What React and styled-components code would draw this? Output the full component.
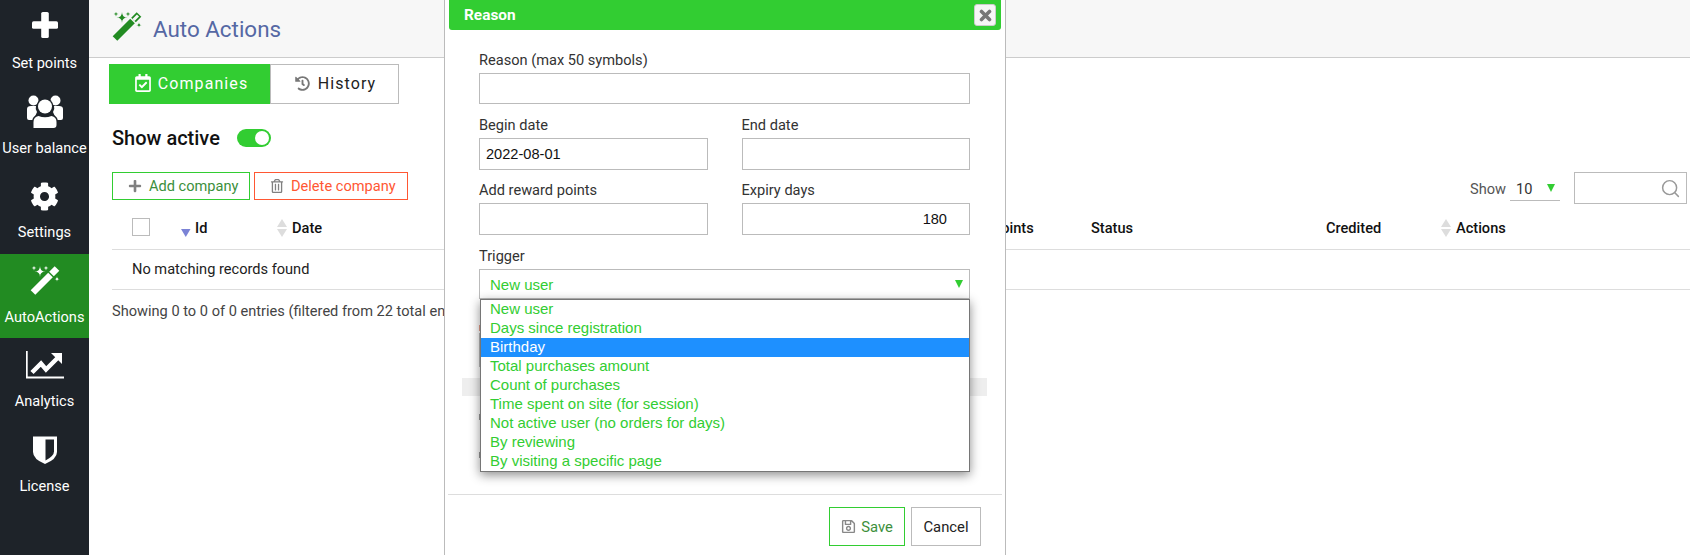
import React from "react";
import styled, { createGlobalStyle } from "styled-components";
import { FaCog, FaHistory, FaRegCalendarCheck, FaRegSave, FaPlus, FaRegTrashAlt } from "react-icons/fa";
import { Search } from "lucide-react";

const GREEN = "#32cd32";
const DARK_GREEN = "#228b22";
const ORANGE = "#ff5733";
const ROBOTO = `Roboto, "Liberation Sans", sans-serif`;
const ARIAL = `"Liberation Sans", Arial, sans-serif`;

const Global = createGlobalStyle`
  html, body { margin: 0; padding: 0; height: 555px; overflow: hidden; background: #fff; }
  * { box-sizing: border-box; }
  body { font-family: ${ROBOTO}; font-size: 14.6px; color: #222; }
`;

const Page = styled.div`
  position: relative;
  display: flex;
  width: 1690px;
  height: 555px;
  overflow: hidden;
`;

const Sidebar = styled.nav`
  flex: 0 0 89px;
  display: flex;
  flex-direction: column;
  background: #1e2329;
`;

const NavItem = styled.a`
  flex: 0 0 84.6px;
  display: flex;
  flex-direction: column;
  align-items: center;
  background: ${(p) => (p.$active ? DARK_GREEN : "transparent")};
  color: #fff;
`;

const NavIcon = styled.span`
  height: 54px;
  display: flex;
  align-items: center;
  justify-content: center;
`;

const NavLabel = styled.span`
  font-size: 14.6px;
  font-weight: 400;
  line-height: 18px;
  white-space: nowrap;
`;

const Main = styled.main`
  flex: 1;
  min-width: 0;
  display: flex;
  flex-direction: column;
`;

const TopBar = styled.header`
  height: 58px;
  flex: none;
  display: flex;
  align-items: flex-start;
  gap: 11px;
  padding: 12px 0 0 23px;
  background: #f7f7f7;
  border-bottom: 1px solid #ccc;
`;

const Title = styled.h1`
  margin: 2px 0 0;
  font-size: 22.4px;
  font-weight: 400;
  line-height: 30px;
  color: #5568a4;
`;

const Tabs = styled.div`
  display: flex;
  margin: 6px 0 0 20px;
  height: 40px;
`;

const Tab = styled.button`
  width: ${(p) => p.$w}px;
  display: flex;
  align-items: center;
  justify-content: center;
  gap: ${(p) => (p.$active ? 6 : 8)}px;
  padding: 0 0 2px ${(p) => (p.$active ? 3 : 2)}px;
  font: 400 16px ${ROBOTO};
  letter-spacing: 1.1px;
  background: ${(p) => (p.$active ? GREEN : "#fff")};
  color: ${(p) => (p.$active ? "#fff" : "#222")};
  border: ${(p) => (p.$active ? "none" : "1px solid #bbb")};
  svg { color: ${(p) => (p.$active ? "#fff" : "#777")}; }
`;

const ActiveRow = styled.div`
  display: flex;
  align-items: center;
  gap: 17px;
  height: 24px;
  margin: 22px 0 0 23px;
  font-size: 20px;
  font-weight: 500;
  color: #111;
`;

const Toggle = styled.span`
  width: 34px;
  height: 18px;
  border-radius: 9px;
  background: ${GREEN};
  display: flex;
  justify-content: flex-end;
  align-items: center;
  padding-right: 2px;
  &::after {
    content: "";
    width: 14px;
    height: 14px;
    border-radius: 50%;
    background: #fff;
  }
`;

const Toolbar = styled.div`
  display: flex;
  height: 28px;
  margin-top: 22px;
  padding: 0 3px 0 23px;
  gap: 4px;
`;

const ActionButton = styled.button`
  height: 28px;
  width: ${(p) => p.$w}px;
  display: flex;
  align-items: center;
  gap: 7px;
  padding: 0 0 0 15px;
  background: #fff;
  border: 1px solid ${(p) => p.$color};
  color: ${(p) => p.$text};
  font: 400 14.6px ${ROBOTO};
  white-space: nowrap;
  svg { color: #808080; }
`;

const LengthGroup = styled.div`
  margin-left: auto;
  display: flex;
  align-items: flex-start;
  gap: 4px;
  color: #555;
  line-height: 34px;
`;

const LengthSelect = styled.span`
  width: 50px;
  height: 29px;
  line-height: 34px;
  padding: 0 5px 0 6px;
  border-bottom: 1px solid #bbb;
  color: #333;
  display: flex;
  justify-content: space-between;
  align-items: flex-start;
`;

const Arrow = styled.i`
  width: 0;
  height: 0;
  flex: none;
  border-left: 4px solid transparent;
  border-right: 4px solid transparent;
  border-top: 8px solid ${GREEN};
`;

const LengthArrow = styled(Arrow)`
  margin-top: 12px;
`;

const SearchBox = styled.div`
  width: 113px;
  height: 32px;
  margin-left: 10px;
  border: 1px solid #bbb;
  display: flex;
  align-items: center;
  justify-content: flex-end;
  padding-right: 5px;
  color: #999;
  background: #fff;
`;

const Table = styled.div`
  margin-left: 23px;
`;

const HeadRow = styled.div`
  display: grid;
  grid-template-columns: 69px 96px 715px 99px 235px 115px 1fr;
  height: 50px;
  padding-top: 18px;
  border-bottom: 1px solid #ddd;
  font-weight: 500;
  color: #111;
  line-height: 20px;
`;

const HeadCell = styled.div`
  display: flex;
  align-items: center;
  height: 20px;
  gap: ${(p) => p.$gap || 0}px;
`;

const CheckCell = styled(HeadCell)`
  padding-left: 20px;
`;

const Checkbox = styled.span`
  width: 18px;
  height: 18px;
  margin-top: -2px;
  border: 1px solid #bbb;
  background: #fff;
`;

const EmptyRow = styled.div`
  height: 40px;
  line-height: 39px;
  padding-left: 20px;
  border-bottom: 1px solid #ddd;
  color: #222;
`;

const Info = styled.div`
  margin: 11px 0 0 23px;
  line-height: 20px;
  color: #444;
  white-space: nowrap;
`;

const Modal = styled.section`
  position: absolute;
  left: 444px;
  top: 0;
  width: 562px;
  background: #fff;
  border-left: 1px solid #bbb;
  border-right: 1px solid #bbb;
`;

const ModalHead = styled.div`
  height: 30px;
  margin: 0 4px;
  padding: 0 5px 0 15px;
  display: flex;
  align-items: center;
  justify-content: space-between;
  background: ${GREEN};
  border-radius: 0 0 3px 3px;
  color: #fff;
  font: 700 15.4px ${ROBOTO};
`;

const CloseButton = styled.button`
  width: 22px;
  height: 22px;
  padding: 0;
  display: flex;
  align-items: center;
  justify-content: center;
  background: #f6f6f6;
  border: 1px solid #ccc;
  border-radius: 3px;
`;

const ModalBody = styled.div`
  display: flex;
  flex-direction: column;
  padding: 20px 35px 36px 34px;
`;

const Field = styled.div`
  display: flex;
  flex-direction: column;
  margin-top: ${(p) => p.$mt || 0}px;
`;

const FieldRow = styled.div`
  display: grid;
  grid-template-columns: 1fr 1fr;
  gap: 34px;
  margin-top: ${(p) => p.$mt || 0}px;
`;

const Label = styled.label`
  line-height: 20px;
  margin-bottom: 3px;
  color: #333;
  white-space: nowrap;
`;

const Input = styled.div`
  height: ${(p) => p.$h || 32}px;
  border: 1px solid #bbb;
  padding: 0 ${(p) => (p.$right ? 22 : 6)}px;
  display: flex;
  align-items: center;
  justify-content: ${(p) => (p.$right ? "flex-end" : "flex-start")};
  font: 400 14.6px ${ARIAL};
  color: #111;
`;

const SelectWrap = styled.div`
  position: relative;
`;

const SelectBox = styled.div`
  height: 30px;
  border: 1px solid #bbb;
  padding: 0 6px 0 10px;
  display: flex;
  align-items: center;
  justify-content: space-between;
  font: 400 15px ${ARIAL};
  color: ${GREEN};
`;

const Dropdown = styled.ul`
  position: absolute;
  left: 1px;
  right: 0;
  top: 30px;
  margin: 0;
  padding: 0;
  list-style: none;
  background: #fff;
  border: 1px solid #767676;
  box-shadow: 0 3px 10px rgba(0, 0, 0, 0.45);
  z-index: 2;
`;

const Option = styled.li`
  height: 19px;
  padding-left: 9px;
  font: 400 15px/17px ${ARIAL};
  color: ${(p) => (p.$selected ? "#fff" : GREEN)};
  background: ${(p) => (p.$selected ? "#1e90ff" : "transparent")};
`;

const Tick = styled.span`
  width: 1px;
  height: 6px;
  flex: none;
  margin-top: ${(p) => p.$mt}px;
  margin-bottom: ${(p) => p.$mb || 0}px;
  background: ${(p) => p.$color || "#999"};
`;

const Band = styled.div`
  height: 18px;
  margin: 11px -17px 0 -17px;
  background: #eee;
`;

const ModalFoot = styled.footer`
  margin: 0 3px;
  padding: 12px 21px 10px 0;
  border-top: 1px solid #ddd;
  display: flex;
  justify-content: flex-end;
  gap: 6px;
`;

const FootButton = styled.button`
  width: ${(p) => p.$w}px;
  height: 39px;
  padding: 0;
  display: flex;
  align-items: center;
  justify-content: center;
  gap: 5px;
  background: #fff;
  border: 1px solid ${(p) => p.$border};
  color: ${(p) => p.$text};
  font: 400 14.8px ${ROBOTO};
  svg { color: #888; }
`;

const Star = ({ x, y, r }) => (
  <path d={`M${x} ${y - r}Q${x} ${y} ${x + r} ${y}Q${x} ${y} ${x} ${y + r}Q${x} ${y} ${x - r} ${y}Q${x} ${y} ${x} ${y - r}Z`} />
);

const WandIcon = ({ color, hollow }) => (
  <svg width="30" height="30" viewBox="0 0 30 30" fill={color} stroke="none">
    <Star x={10} y={5.5} r={5.5} />
    <Star x={4} y={2} r={2.4} />
    <Star x={16} y={2} r={2.4} />
    <Star x={27} y={13} r={2.8} />
    <line x1="3" y1="26.5" x2="20.5" y2="9" stroke={color} strokeWidth="6.5" />
    <line x1="21.5" y1="8" x2="27" y2="2.5" stroke={color} strokeWidth="6.5" />
    {hollow && <line x1="21.5" y1="8" x2="26" y2="3.5" stroke="#f7f7f7" strokeWidth="3" />}
  </svg>
);

const PlusIcon = () => (
  <svg width="26" height="30" viewBox="0 0 26 30" fill="#fff">
    <rect x="9.2" y="0" width="7.6" height="26" rx="1.6" />
    <rect x="0" y="9.2" width="26" height="7.6" rx="1.6" />
  </svg>
);

const UsersIcon = () => (
  <svg width="36" height="33" viewBox="0 0 36 33" fill="#fff">
    <circle cx="6.5" cy="5.5" r="5" />
    <circle cx="28.5" cy="5.5" r="5" />
    <path d="M0 14q0-3 4-3h5q-1 3 1 6l-3 7v1H2q-2 0-2-2z" />
    <path d="M36 14q0-3-4-3h-5q1 3-1 6l3 7v1h5q2 0 2-2z" />
    <circle cx="18" cy="11.5" r="8.4" fill="#1e2329" />
    <circle cx="18" cy="11.5" r="7" />
    <path d="M5 33V27q0-6 6-7.5q7 3 14 0q6 1.5 6 7.5v6z" fill="#1e2329" />
    <path d="M6.5 33V27q0-5 5-6q6.5 2.5 13 0q5 1 5 6v3q0 3-3 3z" />
  </svg>
);

const ChartIcon = () => (
  <svg width="38" height="28" viewBox="0 0 38 28" fill="#fff">
    <path d="M0 0h1.7v25.5H38v2H0z" />
    <path d="M6 21.5l9-9 5 6 13-13" fill="none" stroke="#fff" strokeWidth="4.5" />
    <path d="M25 2h11v11z" />
  </svg>
);

const ShieldIcon = () => (
  <svg width="24" height="28" viewBox="0 0 24 28" fill="#fff">
    <path d="M0 0.5H24V16Q24 23 12 28Q0 23 0 16Z" />
    <path d="M12.5 3.5H21V15.5Q21 20 12.5 24.5Z" fill="#1e2329" />
  </svg>
);

const CloseIcon = () => (
  <svg width="13" height="13" viewBox="0 0 13 13" stroke="#777" strokeWidth="3.6" strokeLinecap="round">
    <path d="M2.5 2.5l8 8M10.5 2.5l-8 8" />
  </svg>
);

const SortIcon = ({ only }) => (
  <svg width="10" height="18" viewBox="0 0 10 18" style={{ flex: "none" }}>
    {only ? (
      <path d="M0 10h9.5l-4.75 8z" fill="#7b83d6" />
    ) : (
      <>
        <path d="M5 0l5 8H0z" fill="#ddd" />
        <path d="M0 10h10l-5 8z" fill="#ddd" />
      </>
    )}
  </svg>
);

const nav = [
  { label: "Set points", icon: <PlusIcon /> },
  { label: "User balance", icon: <UsersIcon /> },
  { label: "Settings", icon: <FaCog size={29} /> },
  { label: "AutoActions", icon: <WandIcon color="#fff" />, active: true },
  { label: "Analytics", icon: <ChartIcon /> },
  { label: "License", icon: <ShieldIcon /> },
];

const options = [
  "New user",
  "Days since registration",
  "Birthday",
  "Total purchases amount",
  "Count of purchases",
  "Time spent on site (for session)",
  "Not active user (no orders for days)",
  "By reviewing",
  "By visiting a specific page",
];

export default function App() {
  return (
    <Page>
      <Global />
      <Sidebar>
        {nav.map((n) => (
          <NavItem key={n.label} $active={n.active}>
            <NavIcon>{n.icon}</NavIcon>
            <NavLabel>{n.label}</NavLabel>
          </NavItem>
        ))}
      </Sidebar>
      <Main>
        <TopBar>
          <WandIcon color={DARK_GREEN} hollow />
          <Title>Auto Actions</Title>
        </TopBar>
        <Tabs>
          <Tab $active $w={161}>
            <FaRegCalendarCheck size={18} />
            Companies
          </Tab>
          <Tab $w={129}>
            <FaHistory size={15} />
            History
          </Tab>
        </Tabs>
        <ActiveRow>
          Show active
          <Toggle />
        </ActiveRow>
        <Toolbar>
          <ActionButton $w={138} $color={GREEN} $text="#3c8f3c">
            <FaPlus size={14} />
            Add company
          </ActionButton>
          <ActionButton $w={154} $color={ORANGE} $text={ORANGE}>
            <FaRegTrashAlt size={14} />
            Delete company
          </ActionButton>
          <LengthGroup>
            Show
            <LengthSelect>
              10
              <LengthArrow />
            </LengthSelect>
            <SearchBox>
              <Search size={21} strokeWidth={1.7} />
            </SearchBox>
          </LengthGroup>
        </Toolbar>
        <Table>
          <HeadRow>
            <CheckCell>
              <Checkbox />
            </CheckCell>
            <HeadCell $gap={4}>
              <SortIcon only />
              Id
            </HeadCell>
            <HeadCell $gap={5}>
              <SortIcon />
              Date
            </HeadCell>
            <HeadCell>Points</HeadCell>
            <HeadCell>Status</HeadCell>
            <HeadCell>Credited</HeadCell>
            <HeadCell $gap={5}>
              <SortIcon />
              Actions
            </HeadCell>
          </HeadRow>
          <EmptyRow>No matching records found</EmptyRow>
        </Table>
        <Info>Showing 0 to 0 of 0 entries (filtered from 22 total entries)</Info>
      </Main>
      <Modal>
        <ModalHead>
          Reason
          <CloseButton>
            <CloseIcon />
          </CloseButton>
        </ModalHead>
        <ModalBody>
          <Field>
            <Label>Reason (max 50 symbols)</Label>
            <Input $h={31} />
          </Field>
          <FieldRow $mt={11}>
            <Field>
              <Label>Begin date</Label>
              <Input>2022-08-01</Input>
            </Field>
            <Field>
              <Label>End date</Label>
              <Input />
            </Field>
          </FieldRow>
          <FieldRow $mt={10}>
            <Field>
              <Label>Add reward points</Label>
              <Input />
            </Field>
            <Field>
              <Label>Expiry days</Label>
              <Input $right>180</Input>
            </Field>
          </FieldRow>
          <Field $mt={11}>
            <Label>Trigger</Label>
            <SelectWrap>
              <SelectBox>
                New user
                <Arrow />
              </SelectBox>
              <Dropdown>
                {options.map((o) => (
                  <Option key={o} $selected={o === "Birthday"}>
                    {o}
                  </Option>
                ))}
              </Dropdown>
            </SelectWrap>
          </Field>
          <Tick $mt={26} $mb={2} $color="#e8a08c" />
          <Input $h={34} />
          <Band />
          <Tick $mt={18} />
          <Tick $mt={32} />
        </ModalBody>
        <ModalFoot>
          <FootButton $w={76} $border={GREEN} $text="#3c8f3c">
            <FaRegSave size={15} />
            Save
          </FootButton>
          <FootButton $w={70} $border="#bbb" $text="#222">
            Cancel
          </FootButton>
        </ModalFoot>
      </Modal>
    </Page>
  );
}
